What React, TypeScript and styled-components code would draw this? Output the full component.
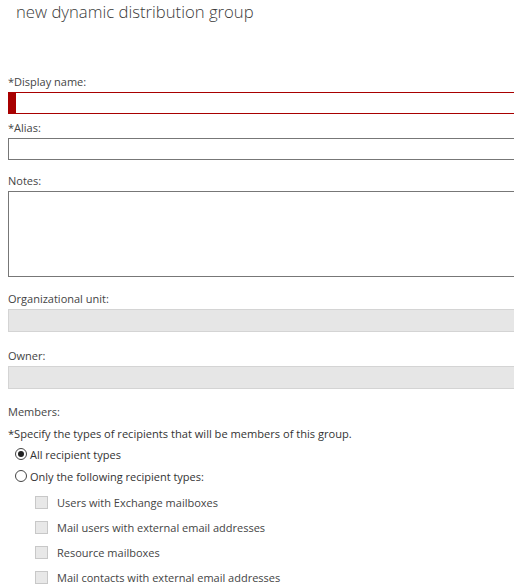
import React from "react";
import styled, { createGlobalStyle } from "styled-components";

const GlobalStyle = createGlobalStyle`
  html, body {
    margin: 0;
    padding: 0;
    background: #ffffff;
    overflow: hidden;
  }
  body {
    font-family: "Open Sans", "Noto Sans", sans-serif;
    color: #333;
  }
`;

const recipientTypes = [
  "Users with Exchange mailboxes",
  "Mail users with external email addresses",
  "Resource mailboxes",
  "Mail contacts with external email addresses",
];

const App: React.FC = () => {
  return (
    <>
      <GlobalStyle />
      <Page>
        <Title>new dynamic distribution group</Title>
        <Form>
          <Field $top={49}>
            <Label>*Display name:</Label>
            <TextBox $invalid />
          </Field>
          <Field $top={5}>
            <Label>*Alias:</Label>
            <TextBox />
          </Field>
          <Field $top={12}>
            <Label>Notes:</Label>
            <NotesBox />
          </Field>
          <Field $top={13}>
            <Label>Organizational unit:</Label>
            <DisabledBox />
          </Field>
          <Field $top={15}>
            <Label>Owner:</Label>
            <DisabledBox />
          </Field>
          <Field $top={14}>
            <Label>Members:</Label>
            <Hint>*Specify the types of recipients that will be members of this group.</Hint>
            <RadioRow>
              <Radio $checked />
              <span>All recipient types</span>
            </RadioRow>
            <RadioRow>
              <Radio />
              <span>Only the following recipient types:</span>
            </RadioRow>
            <CheckList>
              {recipientTypes.map((t) => (
                <CheckRow key={t}>
                  <CheckBox />
                  <span>{t}</span>
                </CheckRow>
              ))}
            </CheckList>
          </Field>
        </Form>
      </Page>
    </>
  );
};

const Page = styled.div`
  width: 514px;
  height: 584px;
  overflow: hidden;
`;

const Title = styled.h1`
  margin: 0;
  padding-left: 16px;
  font-size: 16.7px;
  font-weight: 300;
  line-height: 24px;
  color: #3a3a3a;
`;

const Form = styled.div`
  padding-left: 8px;
  display: flex;
  flex-direction: column;
`;

const Field = styled.div<{ $top: number }>`
  margin-top: ${(p) => p.$top}px;
  display: flex;
  flex-direction: column;
`;

const Label = styled.div`
  font-size: 11px;
  line-height: 18px;
  color: #444;
  margin-bottom: 1px;
`;

const TextBox = styled.div<{ $invalid?: boolean }>`
  box-sizing: border-box;
  width: 530px;
  height: 22px;
  border: 1px solid ${(p) => (p.$invalid ? "#a80000" : "#777")};
  border-left: ${(p) => (p.$invalid ? "8px solid #a80000" : "1px solid #777")};
  background: #fff;
`;

const NotesBox = styled.div`
  box-sizing: border-box;
  width: 530px;
  height: 86px;
  border: 1px solid #777;
  background: #fff;
`;

const DisabledBox = styled.div`
  box-sizing: border-box;
  width: 530px;
  height: 23px;
  border: 1px solid #d4d4d4;
  background: #e6e6e6;
`;

const Hint = styled.div`
  font-size: 11.1px;
  line-height: 18px;
  color: #333;
  margin-top: 3px;
`;

const RadioRow = styled.div`
  display: flex;
  align-items: center;
  gap: 3px;
  padding-left: 7px;
  height: 22px;
  font-size: 11px;
  color: #333;
`;

const Radio = styled.span<{ $checked?: boolean }>`
  box-sizing: border-box;
  width: 12px;
  height: 12px;
  border-radius: 50%;
  border: 1px solid #444;
  background: #fff;
  display: flex;
  align-items: center;
  justify-content: center;

  &::after {
    content: "";
    display: ${(p) => (p.$checked ? "block" : "none")};
    width: 6px;
    height: 6px;
    border-radius: 50%;
    background: #222;
  }
`;

const CheckList = styled.div`
  display: flex;
  flex-direction: column;
  margin-top: 3px;
`;

const CheckRow = styled.div`
  display: flex;
  align-items: center;
  gap: 9px;
  padding-left: 27px;
  height: 25px;
  font-size: 11px;
  color: #444;
`;

const CheckBox = styled.span`
  box-sizing: border-box;
  width: 13px;
  height: 13px;
  border: 1px solid #c8c8c8;
  background: #e8e8e8;
`;

export default App;
